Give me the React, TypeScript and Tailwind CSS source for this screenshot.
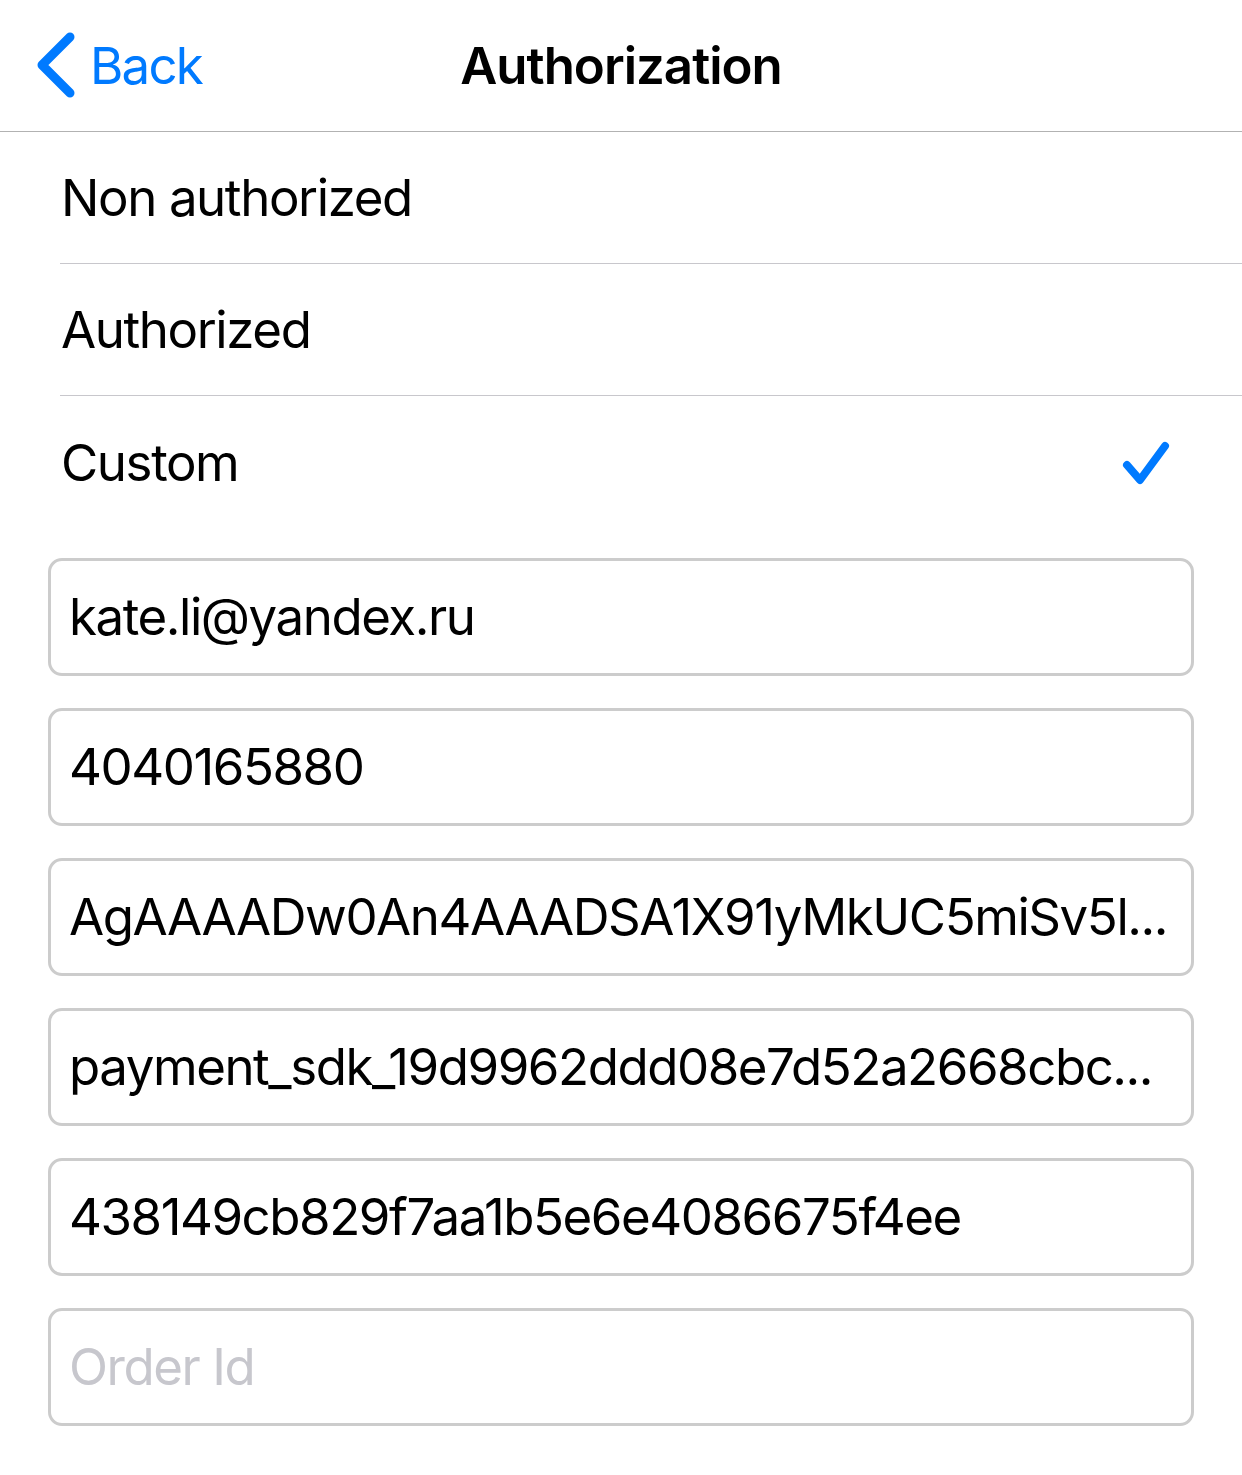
import React from 'react'

const font = { fontFamily: 'Inter, "Liberation Sans", sans-serif' }

function ChevronLeft() {
  return (
    <svg width="40" height="66" viewBox="0 0 40 66" fill="none">
      <path d="M34 5 L6 33 L34 61" stroke="#007aff" strokeWidth="9" strokeLinecap="round" strokeLinejoin="round" />
    </svg>
  )
}

function Check() {
  return (
    <svg width="48" height="46" viewBox="0 0 48 46" fill="none">
      <path d="M5 24 L18 39 L43 5" stroke="#007aff" strokeWidth="8" strokeLinecap="round" strokeLinejoin="round" />
    </svg>
  )
}

const options = [
  { label: 'Non authorized', selected: false },
  { label: 'Authorized', selected: false },
  { label: 'Custom', selected: true },
]

// values are shown the way the device truncates them
const fields = [
  { value: 'kate.li@yandex.ru' },
  { value: '4040165880' },
  { value: 'AgAAAADw0An4AAADSA1X91yMkUC5miSv5l...' },
  { value: 'payment_sdk_19d9962ddd08e7d52a2668cbc...' },
  { value: '438149cb829f7aa1b5e6e4086675f4ee' },
  { value: '', placeholder: 'Order Id' },
]

export default function App() {
  return (
    <div className="w-[1242px] h-[1475px] bg-white text-black overflow-hidden" style={font}>
      {/* nav bar */}
      <div className="relative h-[132px] border-b border-[#b2b2b2] flex items-center justify-center">
        <button className="absolute left-[36px] top-[32px] flex items-center gap-[14px] text-[#007aff]">
          <ChevronLeft />
          <span className="text-[51px] leading-none tracking-[-1.8px]">Back</span>
        </button>
        <h1 className="text-[51px] font-semibold tracking-[-1px] leading-none">Authorization</h1>
      </div>

      {/* options */}
      <div>
        {options.map((o, i) => (
          <div key={o.label} className="pl-[60px]">
            <div
              className={`h-[132px] flex items-center justify-between pr-[72px] ${
                i < options.length - 1 ? 'border-b border-[#c8c7cc]' : ''
              }`}
            >
              <span className="pl-[1px] pt-[2px] text-[51px] tracking-[-1.4px]">{o.label}</span>
              {o.selected && (
                <span className="pt-[4px]">
                  <Check />
                </span>
              )}
            </div>
          </div>
        ))}
      </div>

      {/* fields */}
      <div className="flex flex-col gap-[32px] px-[48px] pt-[30px]">
        {fields.map((f, i) => (
          <div
            key={i}
            className="h-[118px] w-[1146px] shrink-0 rounded-[14px] border-[3px] border-[#cccccc] flex items-center pl-[18px] pr-[6px]"
          >
            <span
              className={`text-[51px] tracking-[-1.45px] whitespace-nowrap ${
                f.value ? 'text-black' : 'text-[#c7c7cd]'
              }`}
            >
              {f.value || f.placeholder}
            </span>
          </div>
        ))}
      </div>
    </div>
  )
}
